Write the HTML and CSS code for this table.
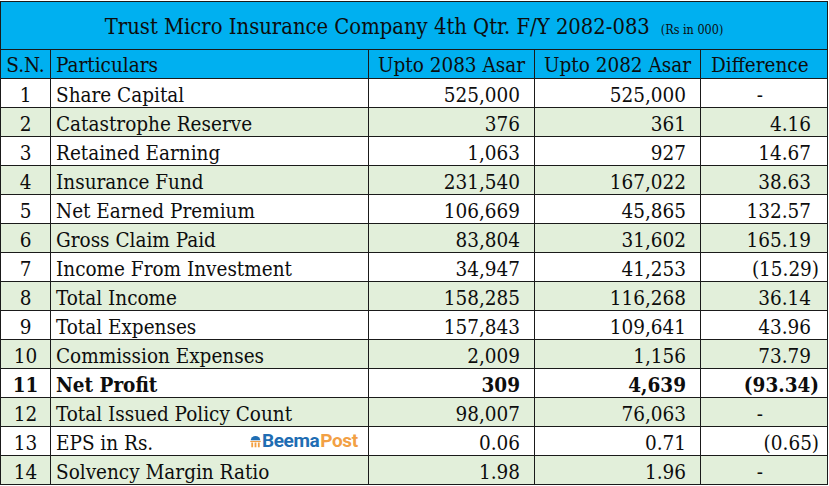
FILE: index.html
```html
<!DOCTYPE html>
<html>
<head>
<meta charset="utf-8">
<link rel="stylesheet" href="styles.css">
</head>
<body>
<table class="report">
  <colgroup>
    <col class="c-sn"><col class="c-part"><col class="c-num"><col class="c-num"><col class="c-diff">
  </colgroup>
  <thead>
    <tr class="title-row">
      <th colspan="5"><span class="title">Trust Micro Insurance Company 4th Qtr. F/Y 2082-083</span><span class="unit">(Rs in 000)</span></th>
    </tr>
    <tr class="head-row">
      <th class="sn">S.N.</th>
      <th class="part">Particulars</th>
      <th class="hnum">Upto 2083 Asar</th>
      <th class="hnum">Upto 2082 Asar</th>
      <th class="hdiff">Difference</th>
    </tr>
  </thead>
  <tbody>
    <tr><td class="sn">1</td><td class="part">Share Capital</td><td class="num">525,000</td><td class="num">525,000</td><td class="diff dash">-</td></tr>
    <tr class="alt"><td class="sn">2</td><td class="part">Catastrophe Reserve</td><td class="num">376</td><td class="num">361</td><td class="diff">4.16</td></tr>
    <tr><td class="sn">3</td><td class="part">Retained Earning</td><td class="num">1,063</td><td class="num">927</td><td class="diff">14.67</td></tr>
    <tr class="alt"><td class="sn">4</td><td class="part">Insurance Fund</td><td class="num">231,540</td><td class="num">167,022</td><td class="diff">38.63</td></tr>
    <tr><td class="sn">5</td><td class="part">Net Earned Premium</td><td class="num">106,669</td><td class="num">45,865</td><td class="diff">132.57</td></tr>
    <tr class="alt"><td class="sn">6</td><td class="part">Gross Claim Paid</td><td class="num">83,804</td><td class="num">31,602</td><td class="diff">165.19</td></tr>
    <tr><td class="sn">7</td><td class="part">Income From Investment</td><td class="num">34,947</td><td class="num">41,253</td><td class="diff neg">(15.29)</td></tr>
    <tr class="alt"><td class="sn">8</td><td class="part">Total Income</td><td class="num">158,285</td><td class="num">116,268</td><td class="diff">36.14</td></tr>
    <tr><td class="sn">9</td><td class="part">Total Expenses</td><td class="num">157,843</td><td class="num">109,641</td><td class="diff">43.96</td></tr>
    <tr class="alt"><td class="sn">10</td><td class="part">Commission Expenses</td><td class="num">2,009</td><td class="num">1,156</td><td class="diff">73.79</td></tr>
    <tr class="bold"><td class="sn">11</td><td class="part">Net Profit</td><td class="num">309</td><td class="num">4,639</td><td class="diff neg">(93.34)</td></tr>
    <tr class="alt"><td class="sn">12</td><td class="part">Total Issued Policy Count</td><td class="num">98,007</td><td class="num">76,063</td><td class="diff dash">-</td></tr>
    <tr><td class="sn">13</td><td class="part part-logo"><span>EPS in Rs.</span><span class="logo"><svg class="logo-icon" viewBox="0 0 12 13" width="11" height="13"><path d="M0.8 5.2 A5.2 4.8 0 0 1 11.2 5.2 Z" fill="#1f6db3"/><rect x="0.3" y="5.9" width="11.4" height="1.2" fill="#f2a044"/><rect x="1.4" y="7.6" width="2" height="5.2" fill="#f2a044"/><rect x="5" y="7.6" width="2" height="5.2" fill="#f2a044"/><rect x="8.6" y="7.6" width="2" height="5.2" fill="#f2a044"/></svg><span class="beema">Beema</span><span class="post">Post</span></span></td><td class="num">0.06</td><td class="num">0.71</td><td class="diff neg">(0.65)</td></tr>
    <tr class="alt"><td class="sn">14</td><td class="part">Solvency Margin Ratio</td><td class="num">1.98</td><td class="num">1.96</td><td class="diff dash">-</td></tr>
  </tbody>
</table>
</body>
</html>
```

FILE: styles.css
```css
html, body {
  margin: 0;
  padding: 0;
  background: #ffffff;
}

body {
  padding-top: 1px;
  font-family: "DejaVu Serif Condensed", "DejaVu Serif", serif;
  font-stretch: condensed;
  color: #0d0d0d;
}

.report {
  border-collapse: collapse;
  table-layout: fixed;
  width: 827px;
  font-size: 20.5px;
}

.c-sn { width: 50px; }
.c-part { width: 318px; }
.c-num { width: 166px; }
.c-diff { width: 127px; }

.report th,
.report td {
  border: 1px solid #1a1a1a;
  padding: 0;
  white-space: nowrap;
  overflow: hidden;
  font-weight: normal;
}

.report .title-row th {
  background: #00b0f0;
  height: 44px;
  text-align: center;
  vertical-align: middle;
  line-height: 1;
  padding-top: 3px;
}

.title {
  font-size: 21.8px;
  line-height: 1;
}

.unit {
  font-size: 12.5px;
  line-height: 1;
  margin-left: 11px;
}

.report .head-row th {
  background: #00b0f0;
  height: 25px;
  line-height: 25px;
  padding-top: 3px;
}

.report tbody td {
  height: 24px;
  line-height: 24px;
  padding-top: 4px;
}

.report .head-row th.sn { text-align: center; }
.report .head-row th.part { text-align: left; padding-left: 5px; }
.report .head-row th.hnum { text-align: center; }
.report .head-row th.hdiff { text-align: left; padding-left: 10px; }

.report td.sn {
  text-align: center;
}

.report td.part {
  text-align: left;
  padding-left: 5px;
}

.report td.num {
  text-align: right;
  padding-right: 14px;
}

.report td.diff {
  text-align: right;
  padding-right: 16px;
}

.report td.diff.neg {
  padding-right: 8px;
}

.report td.diff.dash {
  padding-right: 64px;
}

.report .alt td {
  background: #e2efda;
}

.report .bold td {
  font-weight: bold;
}

.report td.part-logo {
  position: relative;
}

.logo {
  position: absolute;
  left: 199px;
  top: 0;
  display: flex;
  align-items: center;
  height: 28px;
  font-family: Roboto, "Liberation Sans", sans-serif;
  font-stretch: normal;
  font-weight: bold;
  font-size: 19px;
  letter-spacing: -0.4px;
}

.logo-icon {
  margin-right: 1px;
}

.beema {
  color: #1f6db3;
}

.post {
  color: #f2a044;
  margin-left: 1px;
}
```
